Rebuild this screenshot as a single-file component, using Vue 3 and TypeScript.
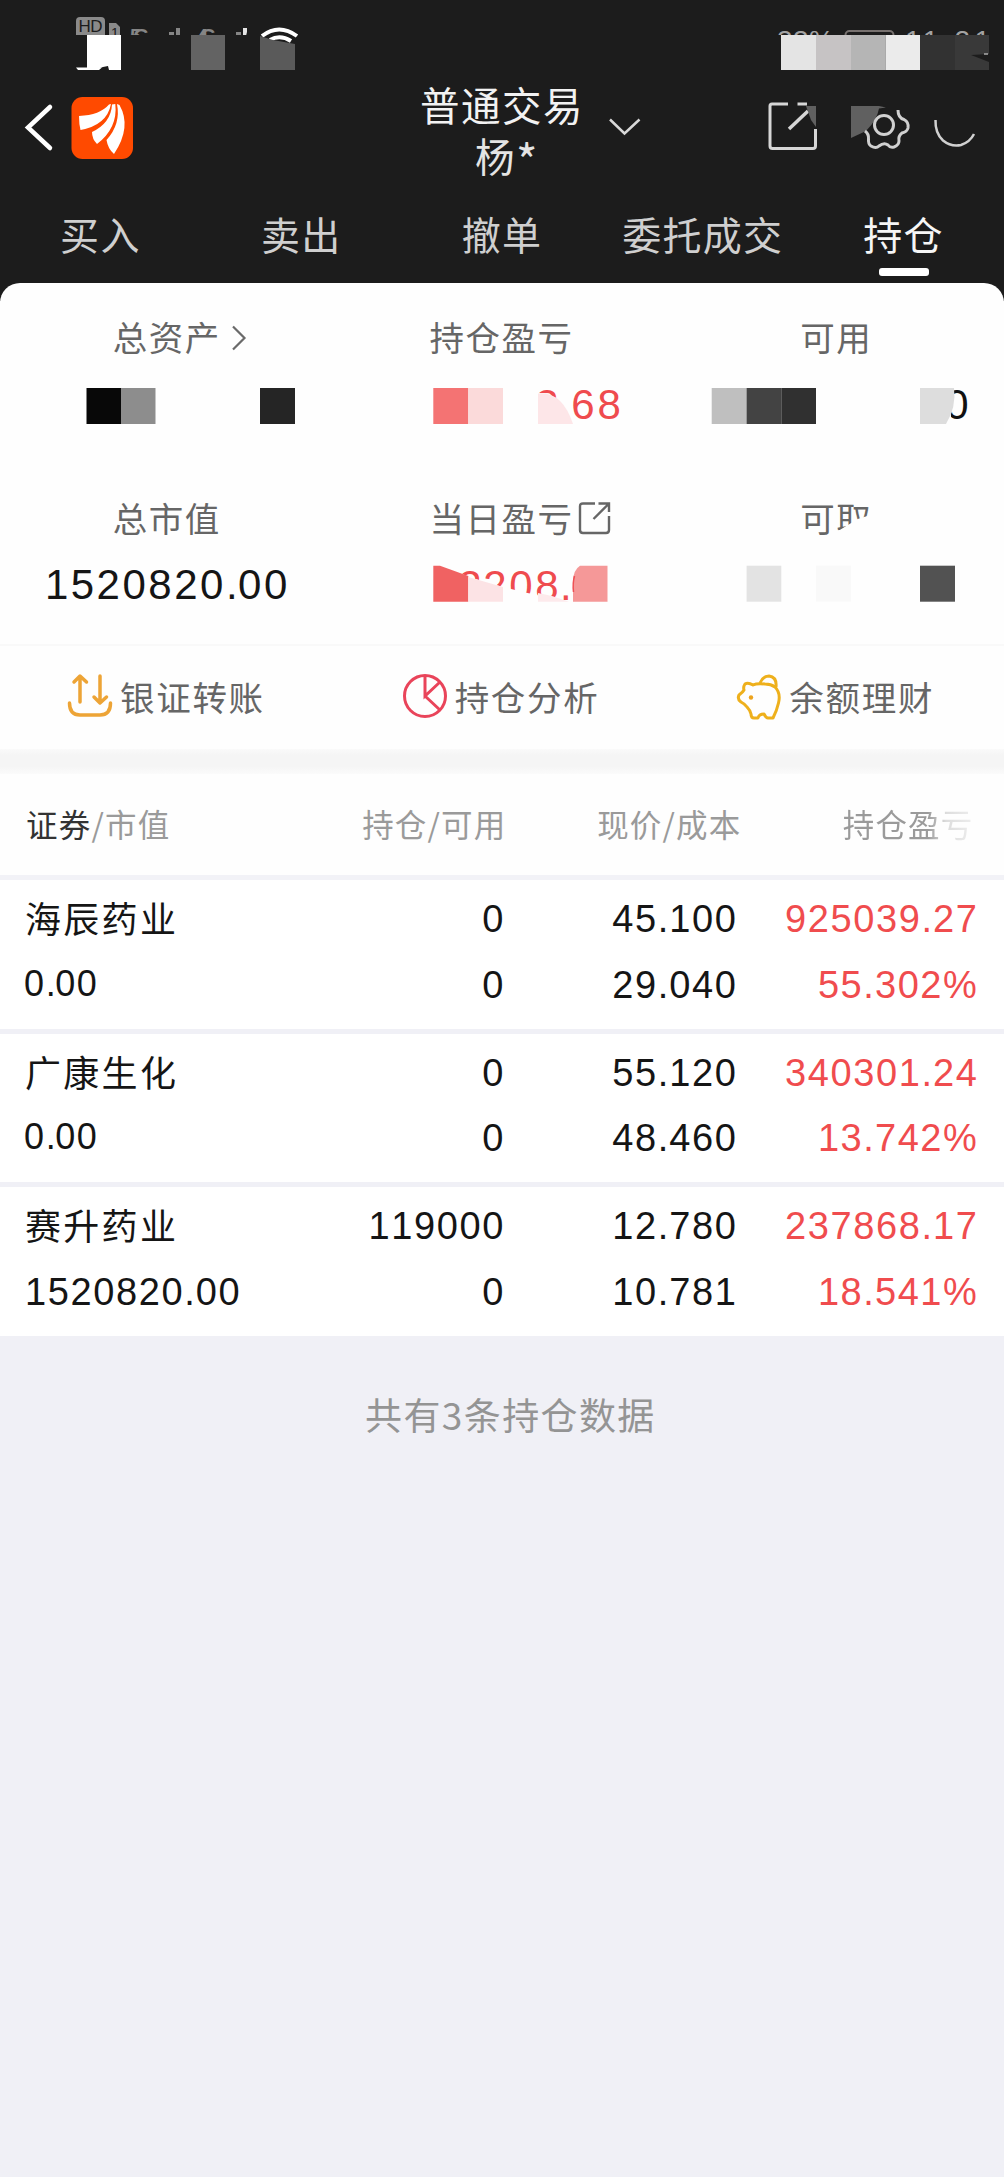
<script setup lang="ts">
import { h } from 'vue'

interface Holding {
  name: string
  value: string
  small: boolean
  amount: string
  usable: string
  price: string
  cost: string
  profit: string
  rate: string
}

// Figure whose decimal point is spaced separately from its digits.
const Num = (props: { v: string }) =>
  h(
    'span',
    { class: 'num' },
    props.v.split('.').flatMap((part, i) => (i ? [h('i', { class: 'num-dot' }, '.'), part] : [part])),
  )
Num.props = ['v']

const tabs = ['买入', '卖出', '撤单', '委托成交', '持仓']
const activeTab = '持仓'

const holdings: Holding[] = [
  { name: '海辰药业', value: '0.00', small: true, amount: '0', usable: '0', price: '45.100', cost: '29.040', profit: '925039.27', rate: '55.302%' },
  { name: '广康生化', value: '0.00', small: true, amount: '0', usable: '0', price: '55.120', cost: '48.460', profit: '340301.24', rate: '13.742%' },
  { name: '赛升药业', value: '1520820.00', small: false, amount: '119000', usable: '0', price: '12.780', cost: '10.781', profit: '237868.17', rate: '18.541%' },
]
</script>

<template>
  <div class="page">
    <header class="top">
      <svg class="status" width="1004" height="78" viewBox="0 0 1004 78">
        <defs>
          <clipPath id="statusClip"><rect x="0" y="0" width="1004" height="35" /></clipPath>
        </defs>
        <g clip-path="url(#statusClip)">
          <rect x="76" y="17" width="29" height="24" rx="4" fill="#8a8a8a" />
          <text x="78.500" y="32" font-size="17" fill="#1c1c1c" textLength="24">HD</text>
          <path d="M109 40V23h7l4 4v13z" fill="#8a8a8a" />
          <text x="111" y="38" font-size="14" fill="#1c1c1c">1</text>
          <g fill="#858585" font-size="20" font-weight="700">
            <text x="130" y="42.500" textLength="19">5G</text>
            <text x="197" y="42.500" textLength="19">4G</text>
          </g>
          <path d="M169 32h5v4h-5zM176 28h4v8h-4zM236 32h5v4h-5z" fill="#858585" />
          <path d="M243 28h4v4l-1 4h-3z" fill="#e4e4e4" />
          <g fill="#a3a3a3" font-size="28">
            <text x="777" y="50" textLength="57">33%</text>
            <text x="905" y="50" textLength="85">11:21</text>
          </g>
          <rect x="845.500" y="31" width="48" height="24" rx="4" fill="none" stroke="#77716f" stroke-width="2" />
        </g>
        <path d="M262 36Q279 23 297 36M270 40Q280 34 291 41" fill="none" stroke="#fff" stroke-width="4" />
        <path d="M87 35h34v35h-12l-1-4-5 1-3 1H87z" fill="#fff" />
        <path d="M76 67.500h26l-3 2.500H78z" fill="#fff" />
        <rect x="191" y="35" width="34" height="35" fill="#636363" />
        <path d="M260 36l13 4 22 4v26h-35z" fill="#5a5a5a" />
        <rect x="781" y="35" width="35" height="35" fill="#e4e4e4" />
        <rect x="816" y="35" width="35" height="35" fill="#c6c3c4" />
        <rect x="851" y="35" width="34.500" height="35" fill="#b5b5b5" />
        <rect x="885.500" y="35" width="34.500" height="35" fill="#ebebeb" />
        <rect x="920" y="35" width="35" height="35" fill="#323232" />
        <rect x="955" y="35" width="34" height="35" fill="#393939" />
        <path d="M971 55l18-1v8z" fill="#1c1c1c" />
        <path d="M984 54h4" stroke="#aaa" stroke-width="1.500" />
      </svg>

      <div class="nav">
        <svg class="nav-left" width="140" height="110" viewBox="0 78 140 110">
          <path d="M50 107L28 127.500L50 148" fill="none" stroke="#fff" stroke-width="4.500" stroke-linecap="round" />
          <rect x="71.500" y="97" width="61.500" height="62" rx="11" fill="#ff4a00" />
          <path d="M79 116Q100 115 109 104.500L111 104Q107 125 80.500 130Q79 124 79 116Z" fill="#fff" />
          <path d="M92 132Q111 123 112 104.500L115.300 104Q118 128 97 144Q92 139 92 132Z" fill="#fff" />
          <path d="M106.500 140Q121 124 117 104L119.500 105Q132 127 114 154Q108 149 106.500 140Z" fill="#fff" />
        </svg>
        <div class="title">
          <span>普通交易</span>
          <span class="owner">杨<i class="star">*</i></span>
        </div>
        <svg class="nav-drop" width="34" height="20" viewBox="608 117 34 20">
          <path d="M610 119.500L624.500 133.500L639.500 119.500" fill="none" stroke="#d8d8d8" stroke-width="2.500" />
        </svg>
        <svg class="nav-right" width="244" height="110" viewBox="760 78 244 110">
          <g fill="none" stroke="#d6d6d6" stroke-width="3">
            <path d="M788 104H772Q770 104 770 106V146Q770 148.500 772.500 148.500H813Q815.500 148.500 815.500 146V129M797.500 104H807" />
            <path d="M789 129L808 111" stroke-width="3.500" />
          </g>
          <path d="M806 106h10v21l-5-7z" fill="#606060" />
          <path d="M851 106h28l7 1.500-7 1Q877 120 866 131L851 138z" fill="#606060" />
          <g fill="none" stroke="#d0d0d0" stroke-width="3">
            <circle cx="884" cy="125" r="9.500" />
            <path d="M898 110Q898 118 904 119.500Q909 122 908 128Q907 132 902 133Q898 136 899 141Q899 145 894 147Q890 148 888 145Q884 142 879 146Q876 149 871 146Q868 144 868.500 139Q869 134 865 131" />
            <path d="M935.500 120Q935 133 943 140.500Q951 147 961 145Q970 142 974 134" stroke-width="2.500" />
          </g>
        </svg>
      </div>

      <nav class="tabs">
        <div v-for="tab in tabs" :key="tab" class="tab" :class="{ active: tab === activeTab }">
          <span>{{ tab }}</span>
        </div>
      </nav>
    </header>

    <section class="card">
      <div class="labels">
        <div class="cell">
          <span class="label">总资产<svg class="more" width="18" height="28" viewBox="0 0 18 28"><path d="M3 2.500L14.500 14L3 25.500" fill="none" stroke="#6a6a6a" stroke-width="2.200" /></svg></span>
        </div>
        <div class="cell"><span class="label">持仓盈亏</span></div>
        <div class="cell"><span class="label">可用</span></div>
      </div>
      <svg class="masked" width="1004" height="44" viewBox="0 384 1004 44">
        <text class="fig red" y="419" x="535.300 571.300 597.500">268</text>
        <rect x="86.500" y="388" width="34.500" height="36" fill="#080808" />
        <rect x="121" y="388" width="34.500" height="36" fill="#8d8d8d" />
        <rect x="260" y="388" width="35" height="36" fill="#252525" />
        <rect x="433.300" y="388" width="35" height="36" fill="#f47373" />
        <rect x="468.300" y="388" width="34.700" height="36" fill="#fbdada" />
        <path d="M534 393H545L556 398L568 399L573 424H534Z" fill="#fefefe" />
        <path d="M538 393.500Q562 391 573 424H538Z" fill="#fde6e8" />
        <rect x="711.700" y="388" width="35" height="36" fill="#bfbfbf" />
        <rect x="746.600" y="388" width="34.700" height="36" fill="#434343" />
        <rect x="781.300" y="388" width="34.700" height="36" fill="#303030" />
        <text class="fig" y="419" x="945.300">0</text>
        <path d="M920 386H953V395Q955 404 951 414V426H920Z" fill="#fefefe" />
        <path d="M920 388H954Q956.500 407 946 424H920Z" fill="#ddd" />
      </svg>

      <div class="labels second">
        <div class="cell"><span class="label">总市值</span></div>
        <div class="cell">
          <span class="label">当日盈亏<svg class="open" width="34" height="34" viewBox="0 0 34 34"><path d="M17 2.500H5Q2 2.500 2 5.500V29Q2 32 5 32H28Q31 32 31 29V15M20.500 2.500H31V11M30 3.500L15.500 18" fill="none" stroke="#666" stroke-width="2.400" /></svg></span>
        </div>
        <div class="cell"><span class="label">可<span class="cut">取</span></span></div>
      </div>
      <div class="market">
        <div class="cell"><Num class="big" v="1520820.00" /></div>
        <svg class="masked over" width="1004" height="44" viewBox="0 562 1004 44">
          <text class="fig red" y="599.500" x="458.300 483.300 509.300 535.300 560">2208.</text>
          <path d="M430 564H440L469 577L503 587L565 602H430Z" fill="#fefefe" />
          <path d="M433.300 565.700H440L468.300 576V601.700H433.300Z" fill="#f06262" />
          <path d="M468.300 577L503 587V601.700H468.300Z" fill="#fce3e5" />
          <path d="M538 593L552 596L569 601.700H538Z" fill="#fdeaec" />
          <path d="M580 565.700H607.500V601.700H573V582Q573 570 580 565.700Z" fill="#f59898" />
          <path d="M574.500 576Q572.500 583 573.500 592" fill="none" stroke="#ee5054" stroke-width="1.500" />
          <rect x="746.600" y="565.700" width="34.700" height="36" fill="#e3e3e3" />
          <rect x="816" y="565.700" width="35" height="36" fill="#f9f9f9" />
          <rect x="920" y="565.700" width="35" height="36" fill="#525252" />
        </svg>
      </div>
    </section>

    <section class="actions">
      <div class="action">
        <svg class="ic-transfer" width="48" height="48" viewBox="66 672 48 48">
          <g fill="none" stroke="#eda436" stroke-width="3.500" stroke-linecap="round" stroke-linejoin="round">
            <path d="M80 702V676.500M74 682L80 676L86.500 682M100 676V702M94 697L100 703L106.500 697" />
            <path d="M69.500 703Q69.500 715 80 715H100Q110.500 715 110.500 703" />
          </g>
        </svg>
        <span>银证转账</span>
      </div>
      <div class="action">
        <svg class="ic-pie" width="48" height="48" viewBox="401 672 48 48">
          <g fill="none" stroke="#e9445a" stroke-width="3">
            <circle cx="425" cy="696" r="20.500" />
            <path d="M425 676V696L440 682M425 696L440 710" />
          </g>
        </svg>
        <span>持仓分析</span>
      </div>
      <div class="action">
        <svg class="ic-pig" width="50" height="50" viewBox="735 671 50 50">
          <g fill="none" stroke="#eeb01c" stroke-width="3" stroke-linejoin="round">
            <path d="M745 683Q743 686 744 689Q743 691 739 694Q737 698 741 701Q745 703 747 706Q750 709 751 713Q751 717 754 717H758Q759 713 764 713Q766 717 768 717H773Q777 709 778.500 702Q781 692 775 686Q771 683 765 683Q757 682 753 684Q748 681 745 683Z" />
            <path d="M760 682Q763 675 769 675Q777 676 776 686" />
          </g>
          <circle cx="751" cy="696.500" r="2.200" fill="#eda31d" />
        </svg>
        <span>余额理财</span>
      </div>
    </section>

    <div class="band"></div>

    <section class="table">
      <div class="thead">
        <span class="c1"><b>证券</b>/市值</span>
        <span class="c2">持仓/可用</span>
        <span class="c3">现价/成本</span>
        <span class="c4">持仓盈亏</span>
      </div>
      <div v-for="item in holdings" :key="item.name" class="row">
        <div class="c1">
          <span class="name">{{ item.name }}</span>
          <Num :class="{ small: item.small }" :v="item.value" />
        </div>
        <div class="c2"><Num :v="item.amount" /><Num :v="item.usable" /></div>
        <div class="c3"><Num :v="item.price" /><Num :v="item.cost" /></div>
        <div class="c4"><Num :v="item.profit" /><Num :v="item.rate" /></div>
      </div>
    </section>

    <p class="summary">共有3条持仓数据</p>
  </div>
</template>

<style>
body {
  margin: 0;
  background: #f0f0f6;
}
.num {
  font-family: "Liberation Sans", sans-serif;
  font-kerning: none;
  letter-spacing: 1.600px;
}
.num-dot {
  font-style: normal;
  letter-spacing: 1px;
}
</style>

<style scoped>
.page {
  width: 1004px;
  min-height: 2177px;
  background: #f0f0f6;
  font-family: "Noto Sans CJK SC", sans-serif;
  color: #151515;
}
svg {
  display: block;
}
.top {
  height: 301px;
  background: #1c1c1c;
}
.status text {
  font-family: "Liberation Sans", sans-serif;
}
.nav {
  display: flex;
  height: 110px;
}
.nav-left,
.nav-right,
.nav-drop {
  flex: none;
}
.nav-drop {
  margin: 39px 118px 0 7px;
}
.title {
  display: flex;
  flex-direction: column;
  width: 461px;
  box-sizing: border-box;
  padding-left: 280px;
  font-size: 39.500px;
  line-height: 51px;
  letter-spacing: 1.500px;
  color: #f2f2f2;
  white-space: nowrap;
}
.title .owner {
  padding-left: 55px;
  color: #e4e4e4;
}
.star {
  font-style: normal;
  font-size: 46px;
  line-height: 0;
  vertical-align: -7px;
}
.tabs {
  display: flex;
  height: 95px;
}
.tab {
  display: flex;
  flex-direction: column;
  align-items: center;
  flex: 1;
  padding-top: 19px;
  font-size: 39px;
  line-height: 52px;
  letter-spacing: 1.300px;
  color: #cfcfcf;
}
.tab.active {
  color: #f6f6f6;
}
.tab.active::after {
  content: "";
  width: 50px;
  height: 8px;
  margin-top: 9px;
  border-radius: 3px;
  background: #fff;
}
.card {
  position: relative;
  height: 361px;
  margin-top: -18px;
  border-radius: 20px 20px 0 0;
  background: #fefefe;
}
.labels {
  display: flex;
  padding-top: 29px;
}
.labels.second {
  padding-top: 65px;
}
.cell {
  width: 334.670px;
  display: flex;
  justify-content: center;
}
.label {
  position: relative;
  height: 48px;
  font-size: 34.500px;
  line-height: 48px;
  letter-spacing: 1.500px;
  margin-left: -1px;
  color: #666;
}
.more {
  position: absolute;
  left: 117px;
  top: 12px;
}
.open {
  position: absolute;
  left: 149px;
  top: 8px;
}
.cut {
  display: inline-block;
  clip-path: polygon(0 0, 100% 0, 100% 45%, 60% 54%, 0 82%);
}
.masked {
  margin-top: 24px;
}
.fig {
  font-family: "Liberation Sans", sans-serif;
  font-size: 42px;
  fill: #111;
}
.fig.red {
  fill: #ef4b4e;
}
.market {
  position: relative;
  height: 44px;
  margin-top: 21px;
}
.big {
  font-size: 42px;
  line-height: 46px;
  letter-spacing: 2.500px;
}
.big :deep(.num-dot) {
  letter-spacing: 0.500px;
}
.masked.over {
  position: absolute;
  left: 0;
  top: 0;
  margin: 0;
}
.actions {
  display: flex;
  box-sizing: border-box;
  height: 105px;
  border-top: 2px solid #f9f9f9;
  background: #fefefe;
}
.action {
  display: flex;
  width: 334.670px;
  box-sizing: border-box;
  padding-left: 66px;
  padding-top: 26px;
  font-size: 34.500px;
  line-height: 48px;
  letter-spacing: 1.700px;
  color: #666;
}
.action span {
  margin-left: 6px;
}
.action .ic-pig + span {
  margin-left: 4px;
}
.band {
  height: 25px;
  background: linear-gradient(#fafafa, #f5f5f5 25%, #f5f5f5 70%, #fbfbfb);
}
.table {
  background: #fff;
}
.thead {
  display: flex;
  height: 101px;
  border-bottom: 5px solid #f2f2f7;
  font-size: 31.500px;
  line-height: 98px;
  letter-spacing: 1.200px;
  color: #9a9a9a;
  background: #fefefe;
}
.thead b {
  font-weight: 400;
  color: #333;
}
.row {
  display: flex;
  height: 148.700px;
  border-bottom: 5px solid #f0f0f6;
}
.row:last-child {
  border-bottom: 0;
}
.c1,
.c2,
.c3,
.c4 {
  box-sizing: border-box;
  flex: none;
}
.c1 {
  width: 263px;
  padding-left: 25px;
}
.c2 {
  width: 242px;
  text-align: right;
}
.c3 {
  width: 232.500px;
  text-align: right;
}
.c4 {
  width: 241px;
  text-align: right;
}
.thead .c1 {
  width: 264.500px;
  padding-left: 26px;
}
.thead .c3 {
  width: 235px;
}
.thead .c4 {
  width: 232px;
  background: linear-gradient(90deg, #9a9a9a 80%, #ddd 88%, #eee 100%);
  background-clip: text;
  -webkit-background-clip: text;
  color: transparent;
}
.row > div {
  display: flex;
  flex-direction: column;
  padding-top: 7px;
  font-size: 38px;
  line-height: 65.500px;
}
.row .name {
  height: 65.500px;
  margin: -2px 0 2px 0;
  font-size: 36px;
  letter-spacing: 2.300px;
}
.row .small {
  font-size: 36px;
  margin-top: -2px;
  margin-left: -1px;
}
.small :deep(.num-dot) {
  letter-spacing: -0.500px;
}
.row .c4 {
  color: #f04c4e;
}
.summary {
  margin: 0;
  padding: 51px 0 0 365px;
  font-size: 37px;
  line-height: 54px;
  letter-spacing: 1.400px;
  color: #949494;
}
</style>
